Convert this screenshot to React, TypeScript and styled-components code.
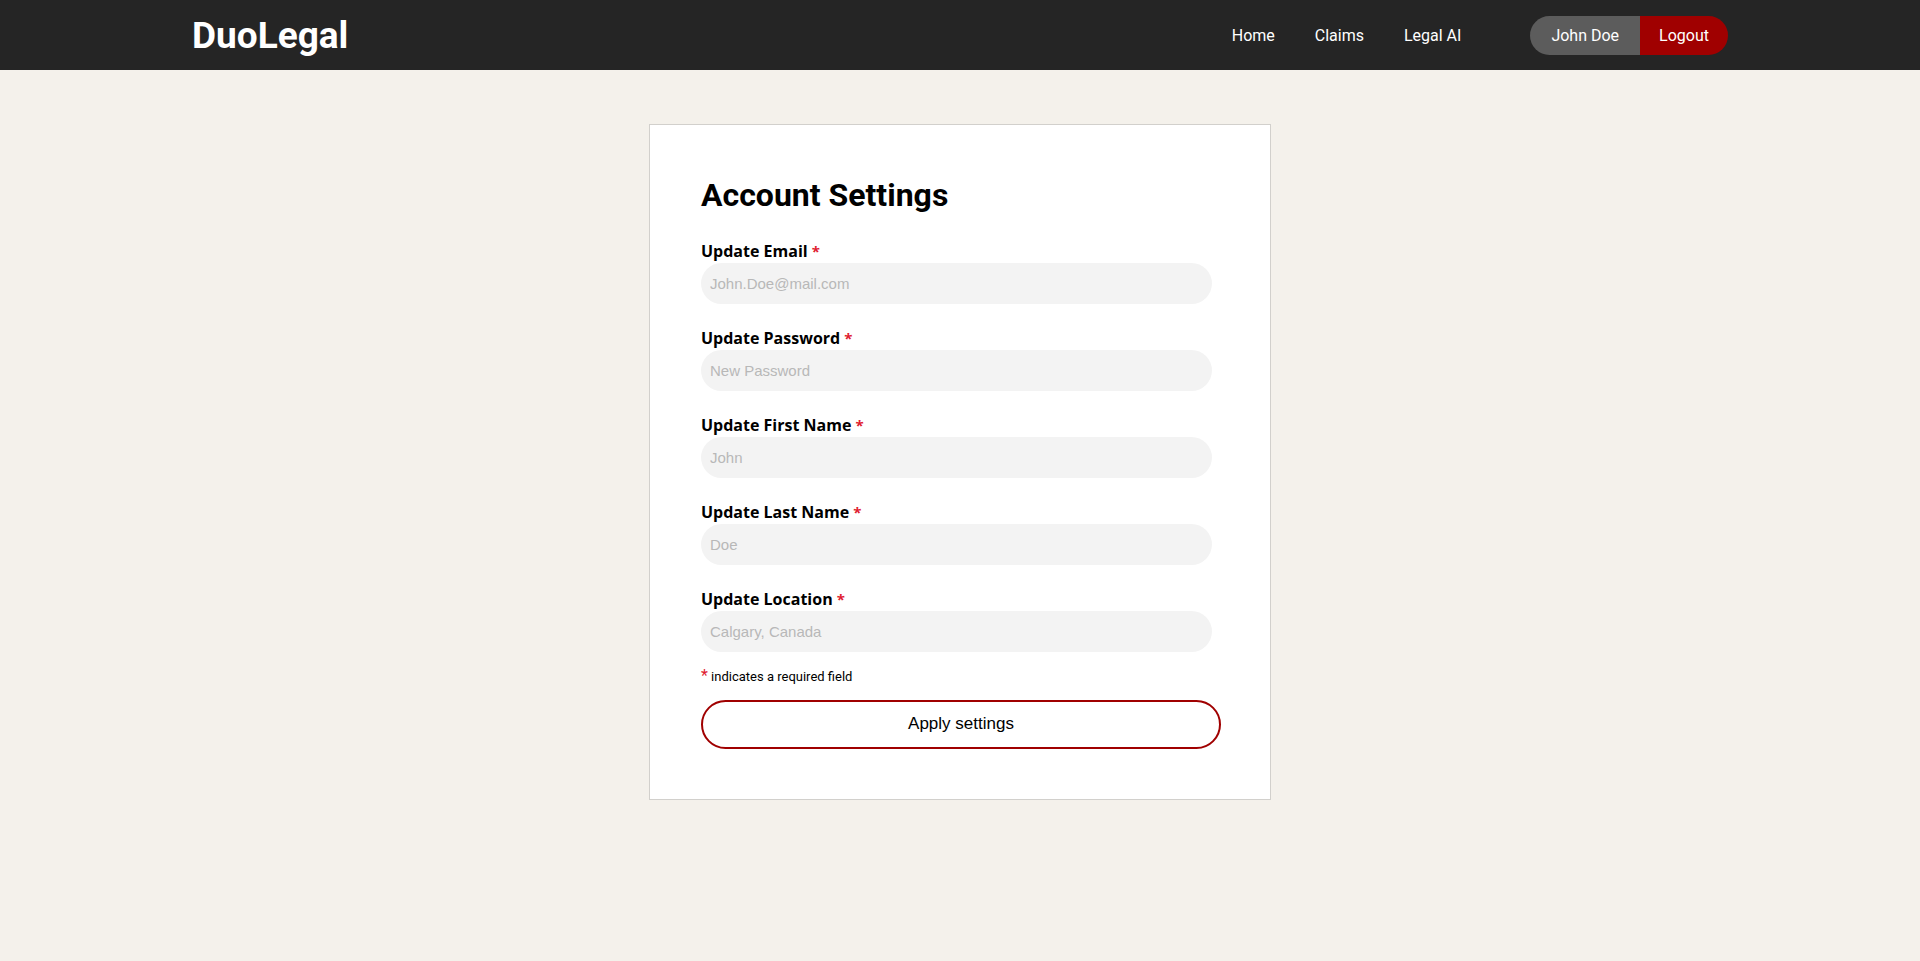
import React from "react";
import styled, { createGlobalStyle } from "styled-components";

const GlobalStyle = createGlobalStyle`
  * {
    box-sizing: border-box;
  }

  body {
    margin: 0;
    background: #f4f1eb;
    font-family: Roboto, "Liberation Sans", Arial, sans-serif;
    color: #000;
  }
`;

const fields = [
  { label: "Update Email", placeholder: "John.Doe@mail.com", type: "email" },
  { label: "Update Password", placeholder: "New Password", type: "password" },
  { label: "Update First Name", placeholder: "John", type: "text" },
  { label: "Update Last Name", placeholder: "Doe", type: "text" },
  { label: "Update Location", placeholder: "Calgary, Canada", type: "text" },
];

export default function App() {
  return (
    <>
      <GlobalStyle />
      <Header>
        <HeaderInner>
          <Logo>DuoLegal</Logo>
          <Nav>
            <NavLink href="#">Home</NavLink>
            <NavLink href="#">Claims</NavLink>
            <NavLink href="#">Legal AI</NavLink>
          </Nav>
          <UserGroup>
            <PillButton>John Doe</PillButton>
            <PillButton $danger>Logout</PillButton>
          </UserGroup>
        </HeaderInner>
      </Header>

      <Main>
        <Card>
          <Title>Account Settings</Title>
          <Form onSubmit={(e) => e.preventDefault()}>
            {fields.map((f) => (
              <Field key={f.label}>
                <Label>
                  {f.label} <Required>*</Required>
                </Label>
                <Input type={f.type} placeholder={f.placeholder} />
              </Field>
            ))}
            <Note>
              <NoteStar>*</NoteStar> indicates a required field
            </Note>
            <ApplyButton type="submit">Apply settings</ApplyButton>
          </Form>
        </Card>
      </Main>
    </>
  );
}

const Header = styled.header`
  height: 70px;
  background: #252525;
`;

const HeaderInner = styled.div`
  width: 1536px;
  height: 100%;
  margin: 0 auto;
  display: flex;
  align-items: center;
`;

const Logo = styled.div`
  color: #fff;
  font-size: 37px;
  font-weight: 700;
  margin-right: auto;
`;

const Nav = styled.nav`
  display: flex;
  gap: 40px;
  margin-right: 69px;
`;

const NavLink = styled.a`
  color: #fff;
  font-size: 16px;
  text-decoration: none;
`;

const UserGroup = styled.div`
  display: flex;
  border-radius: 20px;
  overflow: hidden;
`;

const PillButton = styled.button<{ $danger?: boolean }>`
  height: 39px;
  border: none;
  padding: 0 ${(p) => (p.$danger ? "19px" : "21px")};
  background: ${(p) => (p.$danger ? "#a00000" : "#5c5c5c")};
  color: #fff;
  font-family: Roboto, sans-serif;
  font-size: 16px;
  cursor: pointer;
`;

const Main = styled.main`
  display: flex;
  justify-content: center;
  padding-top: 54px;
  min-height: 891px;
`;

const Card = styled.section`
  width: 622px;
  height: 676px;
  background: #fff;
  border: 1px solid #d2d0cc;
  padding: 52px 50px 50px 51px;
`;

const Title = styled.h2`
  margin: 0 0 27px;
  font-size: 32px;
  font-weight: 700;
  line-height: 37.5px;
`;

const Form = styled.form`
  display: flex;
  flex-direction: column;
`;

const Field = styled.div`
  display: flex;
  flex-direction: column;
  gap: 2px;
  margin-bottom: 25px;

  &:nth-last-of-type(1) {
    margin-bottom: 0;
  }
`;

const Label = styled.label`
  font-family: "Open Sans", "Noto Sans", sans-serif;
  font-size: 16px;
  font-weight: 700;
  line-height: 19px;
`;

const Required = styled.span`
  color: #e0202f;
  font-size: 15px;
`;

const Input = styled.input`
  width: 511px;
  height: 41px;
  border: none;
  border-radius: 21px;
  background: #f3f3f3;
  padding: 0 9px;
  font-family: "Liberation Sans", Arial, sans-serif;
  font-size: 15px;
  outline: none;

  &::placeholder {
    color: #b8b8b8;
  }
`;

const Note = styled.p`
  margin: 15px 0 0;
  font-size: 13px;
  line-height: 18px;
`;

const NoteStar = styled.span`
  color: #e0202f;
  font-size: 16px;
`;

const ApplyButton = styled.button`
  margin-top: 14px;
  width: 520px;
  height: 49px;
  border: 2px solid #a00000;
  border-radius: 25px;
  background: #fff;
  color: #000;
  font-family: "Liberation Sans", Arial, sans-serif;
  font-size: 17px;
  cursor: pointer;
`;
